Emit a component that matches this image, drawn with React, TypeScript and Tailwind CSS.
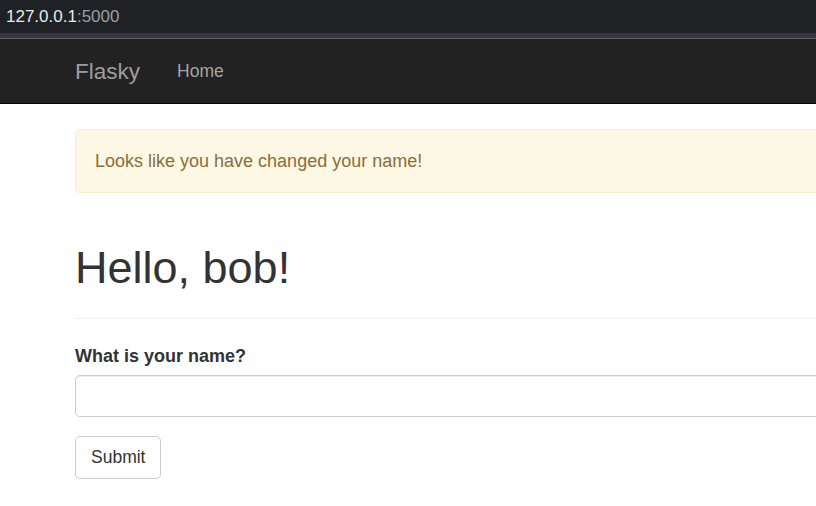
import React from 'react';

const AddressBar: React.FC = () => (
  <div className="bg-[#202124]">
    <div className="h-[33px] flex items-center px-[6px] text-[17px] leading-none">
      <span className="text-[#e8eaed]">127.0.0.1</span>
      <span className="text-[#9aa0a6]">:5000</span>
    </div>
    <div className="h-[5px] bg-[#35363a]" />
    <div className="h-px bg-[#5f6368]" />
  </div>
);

const Navbar: React.FC = () => (
  <nav className="h-[65px] bg-[#222222] border-b border-[#080808]">
    <div className="h-full flex items-center pl-[75px]">
      <a className="text-[22.5px] leading-[25px] text-[#9d9d9d] pr-[19px]">Flasky</a>
      <a className="text-[17.5px] leading-[25px] text-[#a5a5a5] px-[18px]">Home</a>
    </div>
  </nav>
);

export default function App() {
  return (
    <div
      className="w-full min-h-screen bg-white overflow-hidden"
      style={{ fontFamily: '"Liberation Sans", Arial, sans-serif' }}
    >
      <AddressBar />
      <Navbar />
      <div className="w-[1200px] pl-[75px] pt-[25px]">
        <div className="h-[64px] flex items-center pl-[19px] bg-[#fcf8e3] border border-[#faebcc] rounded-[5px] text-[18px] text-[#8a6d3b]">
          Looks like you have changed your name!
        </div>

        <div className="mt-[50px] pb-[13px] border-b border-[#eeeeee]">
          <h1 className="text-[45px] leading-[49.5px] text-[#333333] mb-[12px]">Hello, bob!</h1>
        </div>

        <form className="mt-[25px]">
          <label className="block text-[18px] leading-[25px] font-bold text-[#333333] mb-[6px]">
            What is your name?
          </label>
          <input
            type="text"
            className="block w-full h-[42px] border border-[#cccccc] rounded-[5px] shadow-[inset_0_1px_1px_rgba(0,0,0,0.075)] mb-[19px]"
          />
          <button
            type="button"
            className="h-[43px] px-[15px] bg-white border border-[#cccccc] rounded-[5px] text-[17.5px] text-[#333333]"
          >
            Submit
          </button>
        </form>
      </div>
    </div>
  );
}
